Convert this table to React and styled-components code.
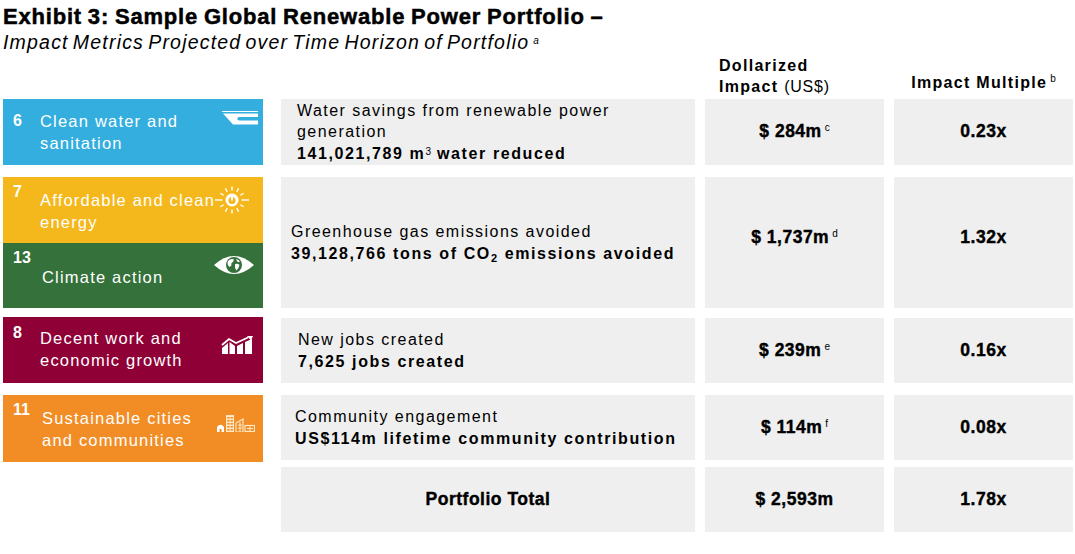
import React from "react";
import styled, { createGlobalStyle } from "styled-components";

const GlobalStyle = createGlobalStyle`
  body {
    margin: 0;
    background: #fff;
    font-family: "Liberation Sans", Arial, sans-serif;
    color: #000;
  }
`;

const Page = styled.div`
  width: 1075px;
  height: 554px;
  padding: 4px 0 0 3px;
  box-sizing: border-box;
  overflow: hidden;
`;

const Title = styled.h1`
  margin: 0;
  font-size: 22px;
  line-height: 25px;
  font-weight: 700;
  letter-spacing: 0.8px;
  word-spacing: -1px;
  -webkit-text-stroke: 0.5px #000;
`;

const Subtitle = styled.div`
  margin-top: 2px;
  font-size: 19.5px;
  line-height: 22px;
  font-style: italic;
  letter-spacing: 1.2px;
  word-spacing: -2.5px;
`;

const Sup = styled.sup`
  font-size: 10px;
  font-weight: 400;
  letter-spacing: 0;
  -webkit-text-stroke: 0;
  vertical-align: ${(p) => p.$raise || 6}px;
  line-height: 0;
  margin-left: ${(p) => p.$gap ?? 3}px;
`;

const Sub = styled.sub`
  font-size: 11px;
  vertical-align: -3px;
  line-height: 0;
`;

const Row = styled.div`
  display: grid;
  grid-template-columns: 268px 414px 179px 179px;
  grid-template-rows: ${(p) => p.$h}px;
  column-gap: 10px;
  margin-top: ${(p) => p.$mt || 0}px;
`;

const HeadCell = styled.div`
  font-size: 16px;
  line-height: 21px;
  font-weight: 700;
  letter-spacing: 1.3px;
  align-self: ${(p) => (p.$end ? "end" : "start")};
  padding: ${(p) => p.$pad};
  text-align: ${(p) => (p.$center ? "center" : "left")};
`;

const Light = styled.span`
  font-weight: 400;
  letter-spacing: 0.8px;
`;

const Cell = styled.div`
  background: #efefef;
  display: flex;
  flex-direction: column;
  justify-content: center;
  align-items: ${(p) => (p.$center ? "center" : "flex-start")};
  padding-left: ${(p) => p.$pl || 0}px;
  font-size: 16px;
  line-height: 21.5px;
  letter-spacing: 1.45px;
`;

const Strong = styled.div`
  font-weight: 700;
  letter-spacing: 1.6px;
`;

const Value = styled.div`
  font-size: 17.5px;
  font-weight: 700;
  letter-spacing: 0.5px;
  -webkit-text-stroke: 0.4px #000;
  margin-top: ${(p) => p.$mt || 0}px;
`;

const TileStack = styled.div`
  display: flex;
  flex-direction: column;
  width: 260px;
`;

const Tile = styled.div`
  position: relative;
  width: 260px;
  height: ${(p) => p.$h}px;
  margin-top: ${(p) => p.$mt || 0}px;
  background: ${(p) => p.$bg};
  color: #fff;
  display: flex;
  align-items: flex-start;
  box-sizing: border-box;
  padding-left: ${(p) => p.$pl || 10}px;
  align-self: start;
`;

const Num = styled.div`
  width: ${(p) => p.$w || 27}px;
  flex: none;
  font-size: 16px;
  line-height: 20px;
  font-weight: 700;
  margin-top: ${(p) => p.$mt}px;
`;

const Goal = styled.div`
  font-size: 16.5px;
  line-height: 22px;
  letter-spacing: 1.2px;
  margin-top: ${(p) => p.$mt}px;
  white-space: nowrap;
`;

const Icon = styled.svg`
  position: absolute;
  top: ${(p) => p.$top}px;
  right: ${(p) => p.$right}px;
`;

const WaterIcon = () => (
  <Icon $top={12} $right={5} width="36" height="16" viewBox="0 0 36 16">
    <rect x="0" y="0" width="36" height="1" fill="#fff" />
    <path d="M1 2.5 H36 V13.5 H11 Z" fill="#fff" />
    <path d="M36 6 H17 Q13.5 7.7 17 9.5 H36 Z" fill="#33aedf" />
  </Icon>
);

const SunIcon = () => {
  const rays = [];
  for (let i = 0; i < 12; i++) {
    const a = (i * Math.PI) / 6;
    const horiz = Math.abs(Math.cos(a)) > 0.99;
    const r1 = 9.5;
    const r2 = horiz ? 17 : 13.5;
    rays.push(
      <line
        key={i}
        x1={20 + r1 * Math.cos(a)}
        y1={14 + r1 * Math.sin(a)}
        x2={20 + r2 * Math.cos(a)}
        y2={14 + r2 * Math.sin(a)}
        stroke="#fff"
        strokeWidth="1.4"
      />
    );
  }
  return (
    <Icon $top={9} $right={11} width="40" height="28" viewBox="0 0 40 28">
      {rays}
      <circle cx="20" cy="14" r="6.5" fill="#fff" />
      <circle cx="20" cy="14.5" r="3.6" fill="#f5b81c" />
      <rect x="19" y="9" width="2" height="5.5" fill="#fff" />
    </Icon>
  );
};

const EyeIcon = () => (
  <Icon $top={12} $right={8} width="42" height="20" viewBox="0 0 42 20">
    <path d="M1 10 Q21 -8 41 10 Q21 28 1 10 Z" fill="#fff" />
    <circle cx="21" cy="10" r="8" fill="#35713a" />
    <path
      d="M16 5 Q19 3.5 21 4.5 L20 7 Q17.5 8 18.5 10.5 L16.5 12 Q14 10 14.5 7 Z"
      fill="#fff"
    />
    <path d="M22 9 Q25 8 26.5 10 Q26 13 23.5 15.5 L22 13 Z" fill="#fff" />
    <path d="M23 4 Q26 4.5 27 7 L24.5 7 Z" fill="#fff" />
  </Icon>
);

const ChartIcon = () => (
  <Icon $top={19} $right={10} width="32" height="18" viewBox="0 0 32 18">
    <polyline
      points="1,9 8,3 15,7 27,1.5"
      fill="none"
      stroke="#fff"
      strokeWidth="1.8"
    />
    <path d="M26 0 L32 0 L30 4.5 Z" fill="#fff" />
    <path d="M1 12 L7 7 V18 H1 Z" fill="#fff" />
    <path d="M8.5 6 L14 10 V18 H8.5 Z" fill="#fff" />
    <path d="M16 10 L22 7 V18 H16 Z" fill="#fff" />
    <path d="M24 6 L31 3 V18 H24 Z" fill="#fff" />
  </Icon>
);

const CityIcon = () => (
  <Icon $top={20} $right={8} width="38" height="17" viewBox="0 0 38 17">
    <path d="M0 17 V12 Q3.5 7.5 7 12 V17 H4.5 V14 H2.5 V17 Z" fill="#fff" />
    <rect x="9" y="0" width="8" height="17" fill="#fde7c4" />
    {[2, 5, 8, 11, 14].map((y) => (
      <g key={y}>
        <rect x="10.3" y={y} width="2.3" height="1.6" fill="#f28d26" />
        <rect x="13.6" y={y} width="2.3" height="1.6" fill="#f28d26" />
      </g>
    ))}
    <path d="M19 17 V8 L26 4 V17 Z" fill="none" stroke="#fde7c4" strokeWidth="1.2" />
    <path d="M21 10 H25 M21 13 H25 M23 7 V17" stroke="#fde7c4" strokeWidth="1" />
    <rect x="28" y="10.5" width="9.5" height="6" fill="none" stroke="#fde7c4" strokeWidth="1.2" />
    <path d="M30 13.5 H36 M33 10.5 V17" stroke="#fde7c4" strokeWidth="1" />
  </Icon>
);

export default function App() {
  return (
    <>
      <GlobalStyle />
      <Page>
        <Title>Exhibit 3: Sample Global Renewable Power Portfolio –</Title>
        <Subtitle>
          Impact Metrics Projected over Time Horizon of Portfolio
          <Sup $raise={5} $gap={4}>a</Sup>
        </Subtitle>

        <Row $h={44}>
          <div />
          <div />
          <HeadCell $pad="2px 0 0 14px">
            Dollarized
            <br />
            Impact <Light>(US$)</Light>
          </HeadCell>
          <HeadCell $end $center $pad="0 0 4px 0">
            Impact Multiple<Sup>b</Sup>
          </HeadCell>
        </Row>

        <Row $h={66} $mt={2}>
          <Tile $h={66} $bg="#33aedf">
            <Num $mt={12}>6</Num>
            <Goal $mt={11}>
              Clean water and
              <br />
              sanitation
            </Goal>
            <WaterIcon />
          </Tile>
          <Cell $pl={16}>
            <div>
              Water savings from renewable power
              <br />
              generation
            </div>
            <Strong>
              141,021,789 m<Sup $gap={0} $raise={4}>3</Sup> water reduced
            </Strong>
          </Cell>
          <Cell $center>
            <Value>
              $ 284m<Sup>c</Sup>
            </Value>
          </Cell>
          <Cell $center>
            <Value>0.23x</Value>
          </Cell>
        </Row>

        <Row $h={131} $mt={12}>
          <TileStack>
            <Tile $h={66} $bg="#f5b81c">
              <Num $mt={5}>7</Num>
              <Goal $mt={12}>
                Affordable and clean
                <br />
                energy
              </Goal>
              <SunIcon />
            </Tile>
            <Tile $h={65} $bg="#35713a" $pl={10}>
              <Num $w={29} $mt={5}>13</Num>
              <Goal $mt={23}>Climate action</Goal>
              <EyeIcon />
            </Tile>
          </TileStack>
          <Cell $pl={10}>
            <div>Greenhouse gas emissions avoided</div>
            <Strong>
              39,128,766 tons of CO<Sub>2</Sub> emissions avoided
            </Strong>
          </Cell>
          <Cell $center>
            <Value $mt={-10}>
              $ 1,737m<Sup>d</Sup>
            </Value>
          </Cell>
          <Cell $center>
            <Value $mt={-10}>1.32x</Value>
          </Cell>
        </Row>

        <Row $h={65} $mt={10}>
          <Tile $h={66} $mt={-1} $bg="#8f0036">
            <Num $mt={6}>8</Num>
            <Goal $mt={10}>
              Decent work and
              <br />
              economic growth
            </Goal>
            <ChartIcon />
          </Tile>
          <Cell $pl={17}>
            <div>New jobs created</div>
            <Strong>7,625 jobs created</Strong>
          </Cell>
          <Cell $center>
            <Value>
              $ 239m<Sup>e</Sup>
            </Value>
          </Cell>
          <Cell $center>
            <Value>0.16x</Value>
          </Cell>
        </Row>

        <Row $h={65} $mt={12}>
          <Tile $h={67} $bg="#f28d26">
            <Num $w={29} $mt={5}>11</Num>
            <Goal $mt={12}>
              Sustainable cities
              <br />
              and communities
            </Goal>
            <CityIcon />
          </Tile>
          <Cell $pl={14}>
            <div>Community engagement</div>
            <Strong>US$114m lifetime community contribution</Strong>
          </Cell>
          <Cell $center>
            <Value>
              $ 114m<Sup>f</Sup>
            </Value>
          </Cell>
          <Cell $center>
            <Value>0.08x</Value>
          </Cell>
        </Row>

        <Row $h={65} $mt={7}>
          <div />
          <Cell $center>
            <Value>Portfolio Total</Value>
          </Cell>
          <Cell $center>
            <Value>$ 2,593m</Value>
          </Cell>
          <Cell $center>
            <Value>1.78x</Value>
          </Cell>
        </Row>
      </Page>
    </>
  );
}
